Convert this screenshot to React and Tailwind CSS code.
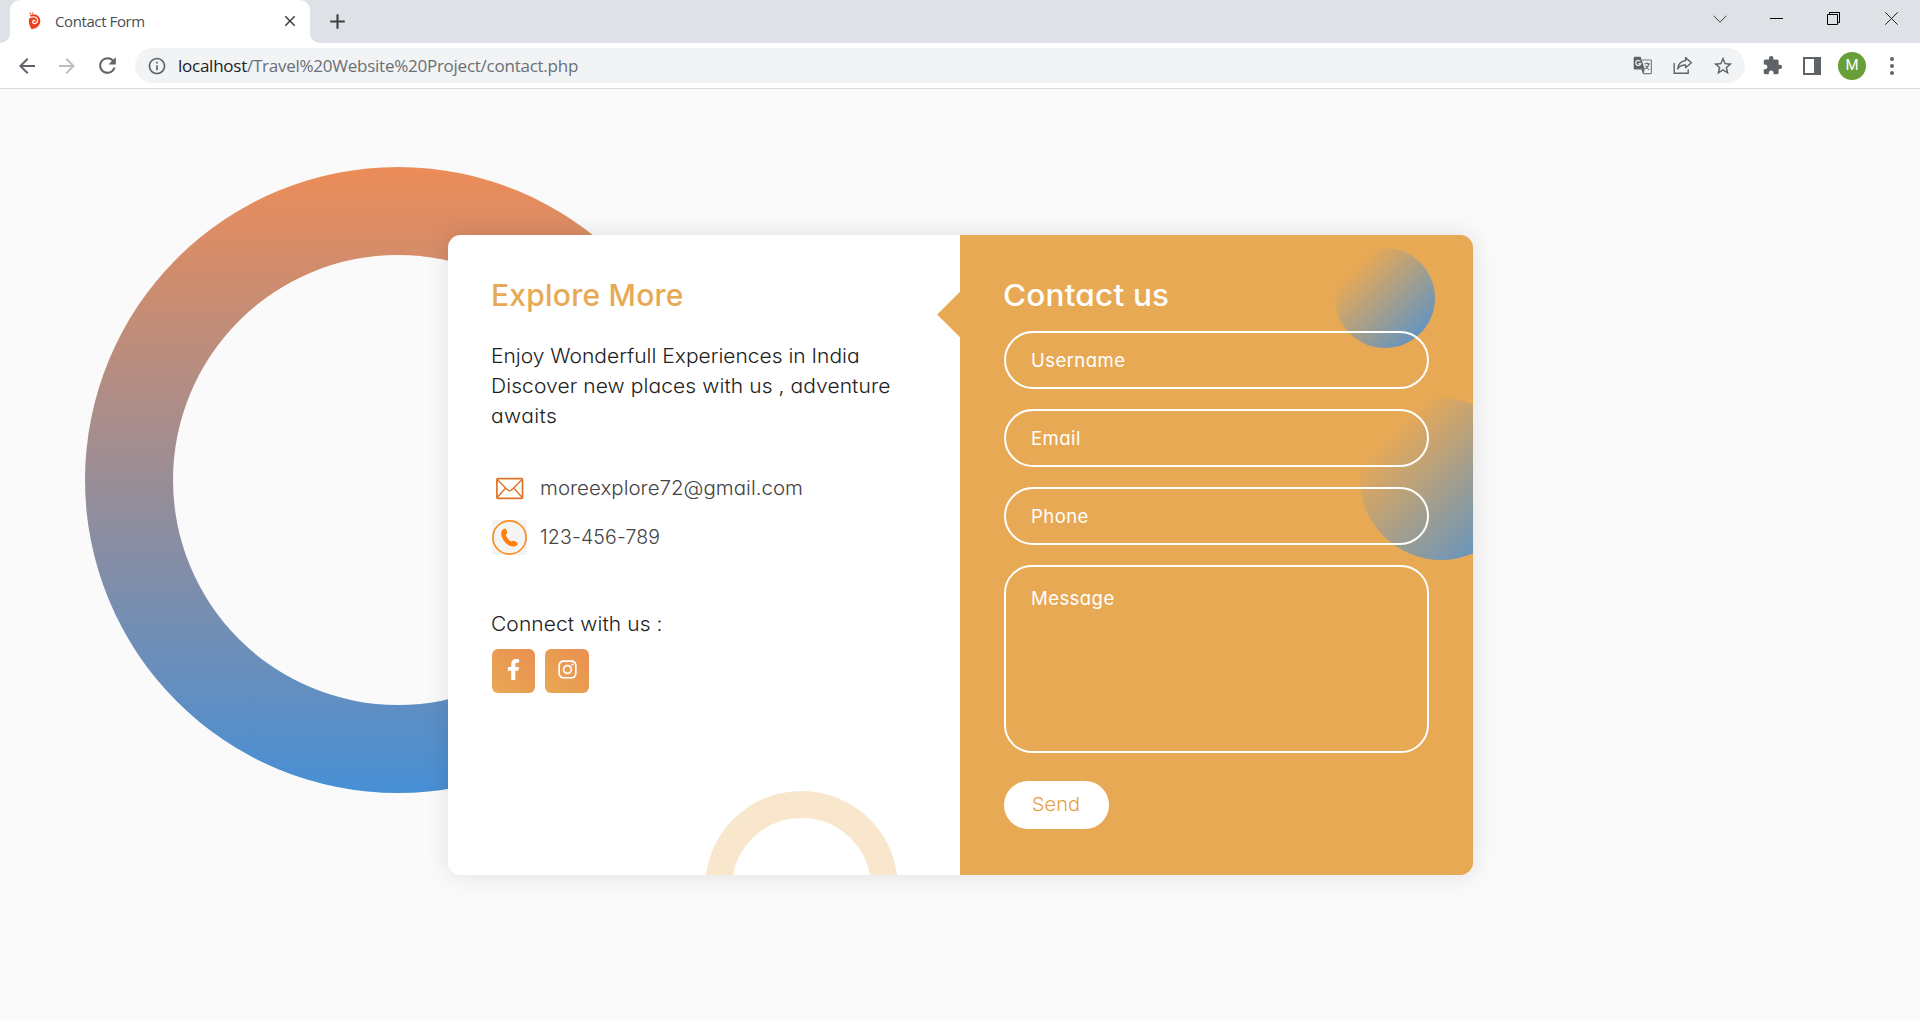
import {
  MdAdd,
  MdArrowBack,
  MdArrowForward,
  MdClose,
  MdExtension,
  MdInfoOutline,
  MdRefresh,
  MdStarBorder,
} from "react-icons/md";
import { FaFacebookF, FaInstagram } from "react-icons/fa";

function Favicon() {
  return (
    <svg width="13" height="18" viewBox="0 0 13 18" fill="none">
      <path
        d="M1.6 3.6C4 1.6 8.2 2 10.6 4.400C13 7 12.800 11.200 10.600 13.800C8.800 16 6.200 17 3.600 17.200C1.400 14.400.6 10.600.9 7.600C1.500 6 2.600 5.200 3.600 5Z"
        fill="#e8421f"
      />
      <path
        d="M3.400 5.400C5.600 4 8.600 5 9.400 7.200C10.200 9.600 8.400 11.800 6.400 11.600C4.600 11.400 4.100 9.400 5.300 8.500C6 8 6.900 8.300 7 9"
        stroke="#fff"
        strokeWidth="1.200"
        strokeLinecap="round"
      />
      <path d="M1.600 1.400H3M4.200.9H5.400" stroke="#e8421f" strokeWidth="1.300" />
    </svg>
  );
}

function TranslateIcon() {
  return (
    <svg width="20" height="19" viewBox="0 0 20 19" fill="none">
      <path d="M9 4H17.600Q18.400 4 18.400 4.800V16.800Q18.400 17.600 17.600 17.600H10.500L9 13.500" stroke="#7b7e82" strokeWidth="1.200" />
      <path d="M1.700.7H7.600L11.900 13.600H1.700Q.7 13.600.7 12.600V1.700Q.7.7 1.700.7Z" fill="#5f6368" />
      <path d="M8.600 13.600H11.900L10.200 17.600Z" fill="#5f6368" />
      <path d="M7.400 5.600A2.500 2.500 0 1 0 7.700 7.700H5.600" stroke="#f1f3f4" strokeWidth="1.200" />
      <path d="M11.400 7.700H17M14.100 6.400V7.700M16 7.900C15.400 10.500 13.800 12 12.300 13M12.500 9.600C13.300 11.500 15 13 16.300 13.900" stroke="#5f6368" strokeWidth="1.100" />
    </svg>
  );
}

function ShareIcon() {
  return (
    <svg width="20" height="19" viewBox="0 0 20 19" fill="none" stroke="#5f6368" strokeWidth="1.400">
      <path d="M1.200 7V17.300H15.200V13.300" />
      <path d="M12.600 1.600L18.400 6.700L12.600 11.800V9C8.800 9 6.400 10.200 4.600 12.800C5.200 8.600 7.800 5.100 12.600 4.500Z" strokeLinejoin="round" />
    </svg>
  );
}

function TabStrip() {
  return (
    <div className="flex h-[43px] bg-[#dee1e6]">
      <div className="flex w-[10px] items-end bg-white">
        <div className="h-full w-full rounded-br-[10px] bg-[#dee1e6]" />
      </div>
      <div className="h-full w-[300px] bg-[#dee1e6]">
        <div className="flex h-full items-center rounded-t-[10px] bg-white pb-px pl-[18px] pr-[11px]">
          <Favicon />
          <span className="ml-[14px] flex-1 text-[15px] leading-[20px] tracking-[-0.4px] text-[#4a4e52]">
            Contact Form
          </span>
          <MdClose className="size-[18px] text-[#3c4043]" />
        </div>
      </div>
      <div className="w-[10px] bg-white">
        <div className="h-full w-full rounded-bl-[10px] bg-[#dee1e6]" />
      </div>
      <div className="flex flex-1 items-center pl-[5px]">
        <MdAdd className="size-[25px] text-[#3c4043]" />
      </div>
      <div className="flex h-[37px] items-center">
        <div className="flex w-[57px] justify-center">
          <svg width="14" height="8" viewBox="0 0 14 8" fill="none" stroke="#3c4043">
            <path d="M.5.7L7 7.200L13.500.7" />
          </svg>
        </div>
        <div className="flex w-[57px] justify-center">
          <div className="h-px w-[13px] bg-black" />
        </div>
        <div className="flex w-[57px] justify-center">
          <svg width="13" height="13" viewBox="0 0 13 13" fill="none" stroke="#000">
            <path d="M.5 2.500H10.500V12.500H.5ZM2.500 2.500V.5H12.500V10.500H10.500" />
          </svg>
        </div>
        <div className="flex w-[58px] justify-center">
          <svg width="13" height="13" viewBox="0 0 13 13" fill="none" stroke="#222">
            <path d="M.3.3L12.700 12.700M12.700.3L.3 12.700" />
          </svg>
        </div>
      </div>
    </div>
  );
}

function Toolbar() {
  return (
    <div className="flex h-[46px] items-center border-b border-[#dadce0] bg-white pl-[7px]">
      <div className="flex w-10 justify-center">
        <MdArrowBack className="size-[24px] text-[#5f6368]" />
      </div>
      <div className="flex w-10 justify-center">
        <MdArrowForward className="size-[24px] text-[#bdbfc2]" />
      </div>
      <div className="flex w-10 justify-center">
        <MdRefresh className="size-[25px] text-[#5f6368]" />
      </div>
      <div className="ml-[8px] flex h-[35px] w-[1610px] items-center rounded-full bg-[#f1f3f4] pl-[12px] pr-[2px]">
        <MdInfoOutline className="size-[20px] text-[#5f6368]" />
        <p className="ml-[11px] flex-1 text-[17px] leading-[24px] tracking-[-0.25px] text-[#6b6f74]">
          <span className="text-[#202124]">localhost</span>/Travel%20Website%20Project/contact.php
        </p>
        <div className="flex w-10 justify-center">
          <TranslateIcon />
        </div>
        <div className="flex w-10 justify-center">
          <ShareIcon />
        </div>
        <div className="flex w-10 justify-center">
          <MdStarBorder className="size-[22px] text-[#5f6368]" />
        </div>
      </div>
      <div className="ml-[7px] flex w-10 justify-center">
        <MdExtension className="size-[21px] text-[#5f6368]" />
      </div>
      <div className="flex w-10 justify-center">
        <div className="h-[18px] w-[18px] border-[2.5px] border-r-[7px] border-[#5f6368]" />
      </div>
      <div className="flex w-10 justify-center">
        <div className="flex size-7 items-center justify-center rounded-full bg-[#689f38] font-[Roboto] text-[15px] text-white">
          M
        </div>
      </div>
      <div className="flex w-10 flex-col items-center gap-[3px]">
        <div className="size-[4px] rounded-full bg-[#5f6368]" />
        <div className="size-[4px] rounded-full bg-[#5f6368]" />
        <div className="size-[4px] rounded-full bg-[#5f6368]" />
      </div>
    </div>
  );
}

function MailIcon() {
  return (
    <svg width="35" height="35" viewBox="0 0 35 35" fill="none" stroke="#dd7429" strokeWidth="1.700">
      <rect x="4.900" y="7.700" width="25.600" height="19.600" rx="1" />
      <path d="M5.200 8.500L15.200 18.500Q17.600 20.800 20 18.500L30.200 8.500M5.200 26.500L13.200 17.500M30.200 26.500L22.200 17.500" strokeWidth="1.400" />
    </svg>
  );
}

function PhoneIcon() {
  return (
    <svg width="35" height="35" viewBox="0 0 35 35" fill="none">
      <rect width="35" height="35" fill="#f4f4f4" />
      <circle cx="17.500" cy="17.500" r="16.600" stroke="#ff8b1f" strokeWidth="1.700" />
      <path
        d="M12.900 8.400Q14.200 8.600 15.100 11.400Q15.500 13.200 14.100 14.400C13.600 15.200 14.300 16.500 15.800 18.600C17.400 20.700 18.600 21.700 19.900 21.300Q21.400 20.300 23 21.200Q25.700 22.800 25.800 23.900C24.600 26.100 22.200 26.900 19.200 26.300C15.400 25.300 11.600 21.500 9.900 17C8.500 13 9.200 9.400 12.900 8.400Z"
        fill="#ff7f0a"
      />
    </svg>
  );
}

function InfoPanel() {
  return (
    <section className="relative w-[512px] overflow-hidden rounded-l-[12.5px] bg-white pl-[44px] pt-[45px]">
      <div className="absolute left-[257px] top-[556px] size-[193px] rounded-full border-[27px] border-[#f8e6cd]" />
      <h3 className="ml-[-1px] text-[30px] font-medium leading-[30px] tracking-[0.23px] text-[#e8a955]">
        Explore More
      </h3>
      <p className="ml-[-1px] mt-[31px] origin-left scale-x-105 whitespace-nowrap text-[20px] font-light leading-[30px] text-[#222]">
        <span className="tracking-[-0.01px]">Enjoy Wonderfull Experiences in India</span>
        <br />
        <span className="tracking-[0.08px]">Discover new places with us , adventure</span>
        <br />
        <span className="tracking-[0.4px]">awaits</span>
      </p>
      <div className="mt-[40px] flex flex-col gap-[14px] text-[19.5px] font-light leading-[30px] text-[#444]">
        <div className="flex items-center gap-[13px]">
          <MailIcon />
          <span className="origin-left scale-x-105 pb-[2px] tracking-[0.02px]">moreexplore72@gmail.com</span>
        </div>
        <div className="flex items-center gap-[13px]">
          <PhoneIcon />
          <span className="pb-px tracking-[0.15px]">123-456-789</span>
        </div>
      </div>
      <p className="ml-[-1px] mt-[54px] origin-left scale-x-105 text-[20px] font-light leading-[30px] tracking-[0.08px] text-[#222]">
        Connect with us :
      </p>
      <div className="mt-[10px] flex gap-[10px] text-white">
        <a className="flex h-[44px] w-[43px] items-center justify-center rounded-[6px] bg-[linear-gradient(45deg,#e8a955,#ea8f50)] pb-[3px]">
          <FaFacebookF className="size-[21px]" />
        </a>
        <a className="flex size-[44px] items-center justify-center rounded-[6px] bg-[linear-gradient(45deg,#e8a955,#ea8f50)] pb-[3px]">
          <FaInstagram className="size-[21px]" />
        </a>
      </div>
    </section>
  );
}

function Field({ label }) {
  return (
    <input
      placeholder={label}
      className="h-[58px] w-full rounded-full border-2 border-white pl-[25px] pr-[24px] text-[18.5px] tracking-[0.45px] text-white placeholder:text-white"
    />
  );
}

function FormPanel() {
  return (
    <section className="relative w-[513px]">
      <div className="absolute left-[-16px] top-[63px] size-[33px] rotate-45 bg-[#e8a955]" />
      <div className="relative h-full overflow-hidden rounded-r-[12.5px] bg-[#e8a955] pl-[44px] pr-[44px] pt-[45px]">
        <div className="absolute left-[375px] top-[13px] size-[100px] rounded-full bg-[linear-gradient(135deg,transparent_20%,#4890d6)]" />
        <div className="absolute left-[400px] top-[163px] size-[162px] rounded-full bg-[linear-gradient(135deg,transparent_20%,#4890d6)]" />
        <form className="relative">
          <h3 className="ml-[-1px] origin-left scale-x-105 text-[30px] font-medium leading-[30px] tracking-[0.2px] text-white">
            Contact us
          </h3>
          <div className="mt-[21px] flex flex-col gap-[20px]">
            <Field label="Username" />
            <Field label="Email" />
            <Field label="Phone" />
            <textarea
              placeholder="Message"
              className="h-[188px] w-full resize-none rounded-[28px] border-2 border-white pl-[25px] pr-[24px] pt-[18px] text-[18.5px] leading-[27px] tracking-[0.45px] text-white placeholder:text-white"
            />
          </div>
          <button
            type="button"
            className="mt-[28px] block h-[48px] w-[105px] rounded-full bg-white pb-px text-[19px] font-light leading-[28px] text-[#e59f42]"
          >
            <span className="inline-block scale-x-105 tracking-[0.1px]">Send</span>
          </button>
        </form>
      </div>
    </section>
  );
}

export default function App() {
  return (
    <div className="flex h-[1020px] w-[1920px] flex-col overflow-hidden bg-[#fafafa] font-['Open_Sans',sans-serif]">
      <TabStrip />
      <Toolbar />
      <main className="relative flex-1 pl-[448px] pt-[146px] font-['Inter',sans-serif] [font-feature-settings:'cv11'_1]">
        <div className="absolute left-[85px] top-[78px] size-[626px] rounded-full bg-[linear-gradient(#ec8c58,#478fd5)] p-[88px]">
          <div className="size-full rounded-full bg-[#fafafa]" />
        </div>
        <div className="relative flex h-[640px] w-[1025px] rounded-[12.5px] shadow-[0_0_25px_1px_rgba(0,0,0,0.1)]">
          <InfoPanel />
          <FormPanel />
        </div>
      </main>
    </div>
  );
}
